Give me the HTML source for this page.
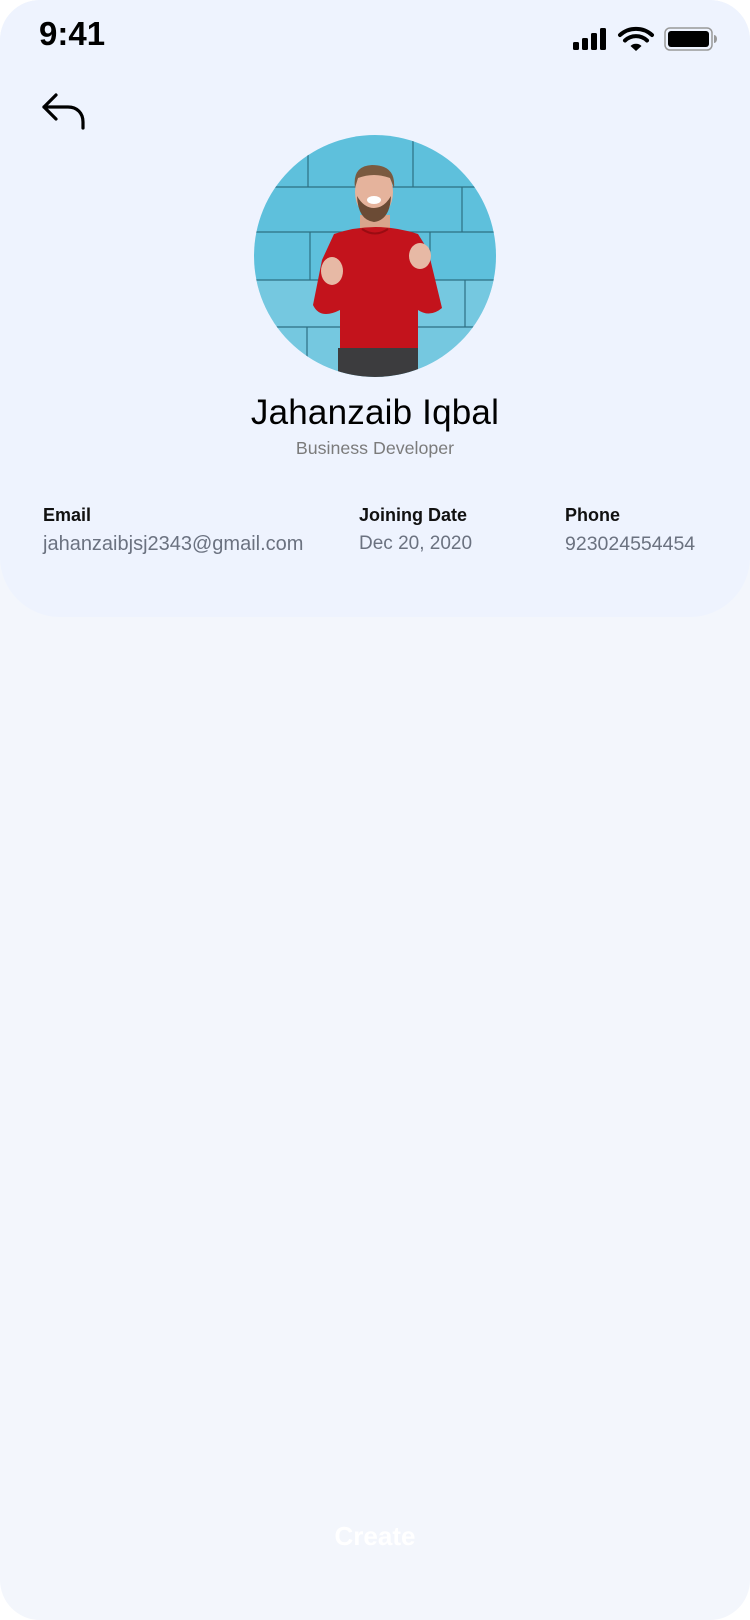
<!DOCTYPE html>
<html><head><meta charset="utf-8"><style>
html,body{margin:0;padding:0;background:#fff;}
body{width:750px;height:1620px;position:relative;overflow:hidden;font-family:"Liberation Sans",Roboto,sans-serif;}
.screen{position:absolute;left:0;top:0;width:750px;height:1620px;background:#f3f6fc;border-radius:40px;overflow:hidden;}
.card{position:absolute;left:0;top:0;width:750px;height:617px;background:#eef3fe;border-radius:0 0 60px 60px;}
.t{position:absolute;white-space:nowrap;}
</style></head><body>
<div class="screen">
<div class="card"></div>
<div class="t" style="left:39px;top:15px;font-size:33px;font-weight:bold;color:#000">9:41</div>
<svg style="position:absolute;left:570px;top:25px" width="150" height="30" viewBox="0 0 150 30">
 <rect x="3" y="17" width="6" height="8" rx="1.5" fill="#000"/>
 <rect x="12" y="13" width="6" height="12" rx="1.5" fill="#000"/>
 <rect x="21" y="8" width="6" height="17" rx="1.5" fill="#000"/>
 <rect x="30" y="3" width="6" height="22" rx="1.5" fill="#000"/>
 <path d="M50 10 A 24 24 0 0 1 82 10" stroke="#000" stroke-width="4" fill="none" stroke-linecap="round"/>
 <path d="M55 15.5 A 16 16 0 0 1 77 15.5" stroke="#000" stroke-width="4" fill="none" stroke-linecap="round"/>
 <path d="M60.5 21 L66 26 L71.5 21 A 8 8 0 0 0 60.5 21 Z" fill="#000"/>
 <rect x="95" y="3" width="47" height="22" rx="5" fill="none" stroke="#999" stroke-width="1.5"/>
 <rect x="98" y="6" width="41" height="16" rx="3" fill="#000"/>
 <path d="M144 10 a3 4 0 0 1 0 8 z" fill="#999"/>
</svg>
<svg style="position:absolute;left:40px;top:92px" width="48" height="40" viewBox="0 0 48 40">
 <path d="M16 3 L4 15 L16 27" stroke="#000" stroke-width="3.2" fill="none" stroke-linecap="round" stroke-linejoin="round"/>
 <path d="M4 15 H28 C37 15 43 21 43 30 V36" stroke="#000" stroke-width="3.2" fill="none" stroke-linecap="round"/>
</svg>
<svg style="position:absolute;left:250px;top:130px" width="250" height="250" viewBox="0 0 250 250">
 <defs><clipPath id="c"><circle cx="125" cy="126" r="121"/></clipPath></defs>
 <g clip-path="url(#c)">
  <rect width="250" height="250" fill="#5ec0dc"/>
  <rect x="0" y="150" width="250" height="100" fill="#86cde2" opacity="0.6"/>
  <g stroke="#2d6f82" stroke-width="1.2" fill="none">
   <path d="M0 57 H250 M0 102 H250 M0 150 H250 M0 197 H250"/>
   <path d="M58 10 V57 M163 10 V57 M212 57 V102 M60 102 V150 M180 102 V150 M215 150 V197 M57 197 V250"/>
  </g>
  <path d="M110 85 H140 V105 H110 Z" fill="#d9a48c"/>
  <path d="M84 104 Q125 90 168 104 L178 120 L192 178 Q180 188 168 180 L168 222 H90 L90 180 Q70 190 63 175 L72 130 Z" fill="#c3131c"/>
  <path d="M112 99 Q125 108 138 99" stroke="#9a0c12" stroke-width="2" fill="none"/>
  <ellipse cx="82" cy="141" rx="11" ry="14" fill="#e7b9a5"/>
  <ellipse cx="170" cy="126" rx="11" ry="13" fill="#e7b9a5"/>
  <ellipse cx="124" cy="62" rx="19" ry="26" fill="#e5b39c"/>
  <path d="M105 58 Q102 36 122 35 Q146 35 144 58 L140 48 Q124 42 108 48 Z" fill="#7a5a40"/>
  <path d="M107 66 Q108 90 124 92 Q140 90 141 66 Q134 78 124 78 Q114 78 107 66 Z" fill="#6b4b35"/>
  <ellipse cx="124" cy="70" rx="7" ry="4" fill="#fff"/>
  <rect x="88" y="218" width="80" height="40" fill="#3c3c3e"/>
 </g>
</svg>
<div class="t" style="left:0;width:750px;text-align:center;top:393px;font-size:35px;font-weight:500;color:#000;letter-spacing:0.2px">Jahanzaib Iqbal</div>
<div class="t" style="left:0;width:750px;text-align:center;top:438px;font-size:17.8px;color:#7b7b7b">Business Developer</div>
<div class="t" style="left:43px;top:505px;font-size:18px;font-weight:bold;color:#111">Email</div>
<div class="t" style="left:43px;top:533px;font-size:20px;color:#6b7280">jahanzaibjsj2343@gmail.com</div>
<div class="t" style="left:359px;top:505px;font-size:18px;font-weight:bold;color:#111">Joining Date</div>
<div class="t" style="left:359px;top:533px;font-size:19px;color:#6b7280">Dec 20, 2020</div>
<div class="t" style="left:565px;top:505px;font-size:18px;font-weight:bold;color:#111">Phone</div>
<div class="t" style="left:565px;top:533px;font-size:19.5px;color:#6b7280">923024554454</div>
<div class="t" style="left:0;width:750px;text-align:center;top:1521px;font-size:26px;font-weight:bold;color:#fff">Create</div>
</div>
</body></html>
